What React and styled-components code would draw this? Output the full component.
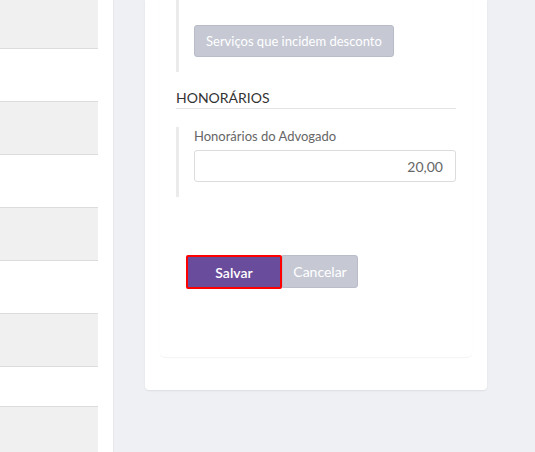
import React from 'react';
import styled, { createGlobalStyle } from 'styled-components';

const GlobalStyle = createGlobalStyle`
  * { box-sizing: border-box; }
  body {
    margin: 0;
    font-family: Lato, "Open Sans", sans-serif;
    background: #fff;
  }
`;

const Page = styled.div`
  display: flex;
  height: 452px;
  overflow: hidden;
  background: #fff;
`;

const SidePane = styled.div`
  width: 113px;
  padding-right: 15px;
  display: flex;
  flex-direction: column;
  flex-shrink: 0;
`;

const Row = styled.div`
  height: ${(p) => p.h}px;
  flex-shrink: 0;
  background: ${(p) => (p.shaded ? '#f0f0f1' : '#fff')};
  border-top: ${(p) => (p.shaded && p.top ? '1px solid #dcdcdc' : 'none')};
  border-bottom: ${(p) => (p.shaded ? '1px solid #dcdcdc' : 'none')};
`;

const Main = styled.div`
  flex: 1;
  background: #eff0f3;
  border-left: 1px solid #e7e8eb;
  padding: 0 48px 0 31px;
`;

const Card = styled.div`
  background: #fff;
  border-radius: 0 0 4px 4px;
  box-shadow: 0 1px 2px rgba(0, 0, 0, 0.08);
  padding: 0 15px 33px 15px;
`;

const Panel = styled.div`
  border-radius: 0 0 5px 5px;
  box-shadow: 0 1px 1px rgba(0, 0, 0, 0.05);
  padding: 0 16px 68px 16px;
`;

const Fieldset = styled.div`
  border-left: 3px solid #ebebeb;
  padding: ${(p) => p.pad};
`;

const GhostButton = styled.button`
  height: 32px;
  padding: 0 11px;
  background: #c6c9d4;
  border: 1px solid #b8bcc9;
  border-radius: 3px;
  color: #fff;
  font-family: Lato, sans-serif;
  font-size: 13px;
  font-weight: normal;
`;

const SectionTitle = styled.h4`
  margin: 16px 0 0 0;
  height: 21px;
  line-height: 20px;
  font-size: 14px;
  font-weight: normal;
  color: #333;
  text-transform: uppercase;
  border-bottom: 1px solid #e3e3e3;
`;

const Label = styled.label`
  display: block;
  font-size: 13px;
  line-height: 18px;
  color: #666;
`;

const Input = styled.input`
  display: block;
  width: 100%;
  height: 32px;
  margin-top: 5px;
  padding: 0 12px;
  border: 1px solid #dcdcdc;
  border-radius: 3px;
  text-align: right;
  font-family: Lato, sans-serif;
  font-size: 14px;
  color: #666;
  outline: none;
`;

const Actions = styled.div`
  display: flex;
  margin: 58px 0 0 10px;
`;

const ActionButton = styled.button`
  height: ${(p) => (p.primary ? 34 : 33)}px;
  width: ${(p) => (p.primary ? 96 : 76)}px;
  padding: 0;
  font-family: Lato, sans-serif;
  font-size: 14px;
  font-weight: ${(p) => (p.primary ? 600 : 'normal')};
  background: ${(p) => (p.primary ? '#6a4c9d' : '#c6c9d4')};
  color: #fff;
  border: ${(p) => (p.primary ? '2px solid #f00' : '1px solid #b9bdca')};
  border-radius: ${(p) => (p.primary ? '2px' : '0 3px 3px 0')};
`;

const rows = [
  { h: 49, shaded: true },
  { h: 52 },
  { h: 54, shaded: true, top: true },
  { h: 52 },
  { h: 54, shaded: true, top: true },
  { h: 52 },
  { h: 54, shaded: true, top: true },
  { h: 39 },
  { h: 60, shaded: true, top: true },
];

export default function App() {
  return (
    <Page>
      <GlobalStyle />
      <SidePane>
        {rows.map((r, i) => (
          <Row key={i} h={r.h} shaded={r.shaded} top={r.top} />
        ))}
      </SidePane>
      <Main>
        <Card>
          <Panel>
            <Fieldset pad="25px 0 15px 15px">
              <GhostButton>Serviços que incidem desconto</GhostButton>
            </Fieldset>
            <SectionTitle>Honorários</SectionTitle>
            <Fieldset pad="0 0 15px 15px" style={{ marginTop: 18 }}>
              <Label>Honorários do Advogado</Label>
              <Input defaultValue="20,00" />
            </Fieldset>
            <Actions>
              <ActionButton primary>Salvar</ActionButton>
              <ActionButton>Cancelar</ActionButton>
            </Actions>
          </Panel>
        </Card>
      </Main>
    </Page>
  );
}
